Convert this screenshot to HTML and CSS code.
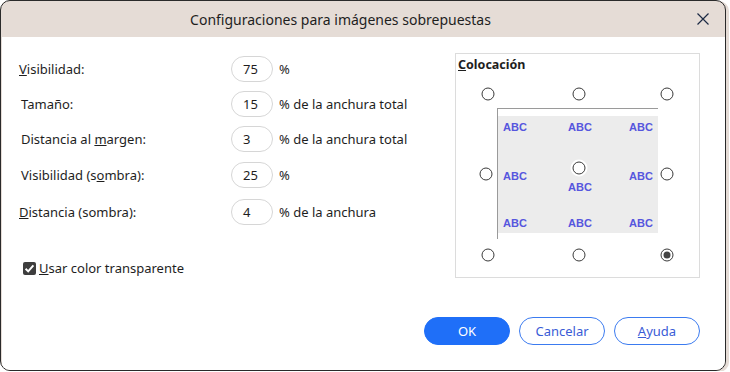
FILE: index.html
```html
<!DOCTYPE html>
<html lang="es">
<head>
<meta charset="utf-8">
<title>Configuraciones para imágenes sobrepuestas</title>
<link rel="stylesheet" href="styles.css">
</head>
<body>
<div class="win">
  <div class="titlebar">
    <div class="title">Configuraciones para imágenes sobrepuestas</div>
    <div class="close">
      <svg width="12" height="12" viewBox="0 0 12 12"><path d="M0.5 0.5 L11.5 11.5 M11.5 0.5 L0.5 11.5" stroke="#1c2a44" stroke-width="1.2" fill="none"/></svg>
    </div>
  </div>
  <div class="content">
    <div class="main">
      <div class="form">
        <div class="row">
          <span class="label l-edge"><u>V</u>isibilidad:</span>
          <span class="field">75</span>
          <span class="unit">%</span>
        </div>
        <div class="row">
          <span class="label">Tamaño:</span>
          <span class="field">15</span>
          <span class="unit">% de la anchura total</span>
        </div>
        <div class="row">
          <span class="label">Distancia al <u>m</u>argen:</span>
          <span class="field">3</span>
          <span class="unit">% de la anchura total</span>
        </div>
        <div class="row r4">
          <span class="label">Visibilidad (s<u>o</u>mbra):</span>
          <span class="field">25</span>
          <span class="unit">%</span>
        </div>
        <div class="row r5">
          <span class="label l-edge"><u>D</u>istancia (sombra):</span>
          <span class="field">4</span>
          <span class="unit">% de la anchura</span>
        </div>
        <div class="check-row">
          <span class="checkbox">
            <svg width="13" height="13" viewBox="0 0 13 13"><path d="M2.6 6.8 L5.2 9.4 L10.4 3.4" stroke="#fff" stroke-width="2" fill="none"/></svg>
          </span>
          <span class="check-label"><u>U</u>sar color transparente</span>
        </div>
      </div>
      <div class="group">
        <div class="group-title"><u>C</u>olocación</div>
        <div class="canvas">
          <div class="preview">
            <span class="abc a1">ABC</span>
            <span class="abc a2">ABC</span>
            <span class="abc a3">ABC</span>
            <span class="abc a4">ABC</span>
            <span class="abc a5">ABC</span>
            <span class="abc a6">ABC</span>
            <span class="abc a7">ABC</span>
            <span class="abc a8">ABC</span>
            <span class="abc a9">ABC</span>
          </div>
          <span class="radio p1"></span>
          <span class="radio p2"></span>
          <span class="radio p3"></span>
          <span class="radio p4"></span>
          <span class="radio p5 boxed"></span>
          <span class="radio p6"></span>
          <span class="radio p7"></span>
          <span class="radio p8"></span>
          <span class="radio p9 on"></span>
        </div>
      </div>
    </div>
    <div class="buttons">
      <button class="btn primary">OK</button>
      <button class="btn">Cancelar</button>
      <button class="btn"><u>A</u>yuda</button>
    </div>
  </div>
</div>
</body>
</html>
```
FILE: styles.css
```css
html, body {
  margin: 0;
  padding: 0;
  background: #ffffff;
}
body {
  font-family: "Noto Sans", "Open Sans", sans-serif;
  color: #1e1e1e;
}
.win {
  width: 724px;
  height: 369px;
  border: 1px solid #2a2a2a;
  border-radius: 10px;
  background: #e5dcd6;
  overflow: hidden;
  display: flex;
  flex-direction: column;
  box-shadow: 3px 1px 0 #e5dcd6;
}
.titlebar {
  height: 36px;
  flex: none;
  display: flex;
  align-items: center;
}
.title {
  flex: 1;
  text-align: center;
  font-size: 14px;
  color: #1e1e1e;
  padding-left: 2px;
}
.close {
  width: 12px;
  height: 12px;
  margin: 0 16px 1px 19px;
  display: flex;
}
.content {
  flex: 1;
  background: #ffffff;
  margin: 0 0 0 1px;
  display: flex;
  flex-direction: column;
}
.main {
  display: flex;
  flex: 1;
}
.form {
  width: 433px;
  padding-top: 19px;
  padding-left: 17px;
  display: flex;
  flex-direction: column;
}
.row {
  display: flex;
  align-items: center;
  height: 26px;
  margin-bottom: 9px;
  font-size: 13px;
}
.row.r4 { margin-top: 1px; }
.row.r5 { margin-top: 2px; }
.label {
  width: 212px;
  padding-left: 2px;
  box-sizing: border-box;
}
.label.l-edge { padding-left: 0; }
.field {
  width: 42px;
  height: 26px;
  box-sizing: border-box;
  border: 1px solid #d6d6d6;
  border-radius: 13px;
  display: flex;
  align-items: center;
  padding-left: 11px;
  font-size: 13px;
}
.unit {
  margin-left: 6px;
}
.check-row {
  display: flex;
  align-items: center;
  margin-top: 25px;
  margin-left: 4px;
  font-size: 13px;
}
.checkbox {
  width: 13px;
  height: 13px;
  background: #3e3e3e;
  border-radius: 2px;
  display: flex;
}
.check-label {
  margin-left: 3px;
}
.group {
  margin-top: 16px;
  margin-left: 3px;
  width: 245px;
  height: 225px;
  border: 1px solid #dcdcdc;
  box-sizing: border-box;
  display: flex;
  flex-direction: column;
}
.group-title {
  font-size: 12.5px;
  font-weight: bold;
  padding: 3px 0 0 2px;
  line-height: 16px;
}
.canvas {
  position: relative;
  flex: 1;
}
.preview {
  position: absolute;
  left: 41px;
  top: 35px;
  width: 160px;
  height: 130px;
  border-left: 1px solid #9a9a9a;
  border-top: 1px solid #9a9a9a;
  background: linear-gradient(#ffffff, #ffffff) no-repeat 0 0 / 100% 7px, #ececec;
  background-clip: padding-box;
}
.preview::after {
  content: "";
  position: absolute;
  left: 0;
  right: 0;
  bottom: 0;
  height: 6px;
  background: #ffffff;
}
.abc {
  position: absolute;
  font-family: "Liberation Sans", Arial, sans-serif;
  font-weight: bold;
  font-size: 11px;
  line-height: 12px;
  color: #5656de;
  transform: translate(-50%, -50%);
}
.a1 { left: 17px; top: 18px; }
.a2 { left: 82px; top: 18px; }
.a3 { left: 143px; top: 18px; }
.a4 { left: 17px; top: 67px; }
.a5 { left: 82px; top: 78px; }
.a6 { left: 143px; top: 67px; }
.a7 { left: 17px; top: 114px; }
.a8 { left: 82px; top: 114px; }
.a9 { left: 143px; top: 114px; }
.radio {
  position: absolute;
  width: 13px;
  height: 13px;
  box-sizing: border-box;
  border: 1px solid #3a3a3a;
  border-radius: 50%;
  background: #ffffff;
  transform: translate(-50%, -50%);
}
.radio.boxed {
  box-shadow: 0 0 0 2px #ffffff;
}
.radio.on::after {
  content: "";
  position: absolute;
  left: 2px;
  top: 2px;
  width: 7px;
  height: 7px;
  border-radius: 50%;
  background: #444444;
}
.p1 { left: 32px; top: 21px; }
.p2 { left: 123px; top: 21px; }
.p3 { left: 211px; top: 21px; }
.p4 { left: 30px; top: 101px; }
.p5 { left: 123px; top: 95px; }
.p6 { left: 211px; top: 101px; }
.p7 { left: 32px; top: 182px; }
.p8 { left: 123px; top: 182px; }
.p9 { left: 211px; top: 182px; }
.buttons {
  display: flex;
  justify-content: flex-end;
  gap: 9px;
  padding: 0 25px 25px 0;
}
.btn {
  width: 86px;
  height: 28px;
  border-radius: 14px;
  border: 1px solid #3b7bf0;
  background: #ffffff;
  color: #3a5cd6;
  font-family: "Noto Sans", "Open Sans", sans-serif;
  font-size: 13px;
  padding: 0;
}
.btn.primary {
  background: #1f6ff8;
  border-color: #1f6ff8;
  color: #ffffff;
}
```
